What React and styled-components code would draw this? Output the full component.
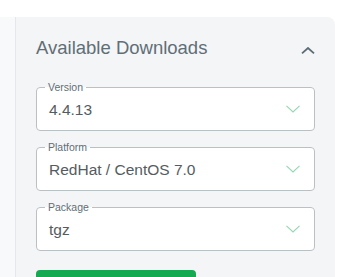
import React from "react";
import styled, { createGlobalStyle } from "styled-components";

const GlobalStyle = createGlobalStyle`
  html, body { margin: 0; padding: 0; background: #ffffff; }
  body { font-family: "Liberation Sans", Arial, sans-serif; overflow: hidden; }
  * { box-sizing: border-box; }
`;

const Page = styled.div`
  display: flex;
  align-items: stretch;
  padding-top: 17px;
  height: 277px;
`;

const Sidebar = styled.div`
  width: 16px;
  background: #f8f9fa;
  border-right: 1px solid #e4e8eb;
`;

const Panel = styled.section`
  width: 319px;
  background: #f4f5f7;
  border-top-right-radius: 8px;
  padding: 20px 20px 0 20px;
  display: flex;
  flex-direction: column;
`;

const Header = styled.div`
  display: flex;
  justify-content: space-between;
  align-items: flex-start;
  height: 22px;
`;

const Title = styled.h2`
  margin: 0;
  font-size: 18.5px;
  line-height: 22px;
  font-weight: 400;
  color: #606e76;
`;

const Toggle = styled.svg`
  margin-top: 10px;
  display: block;
`;

const Fields = styled.div`
  display: flex;
  flex-direction: column;
  gap: 10px;
  margin-top: 22px;
`;

const Box = styled.fieldset`
  margin: 0;
  padding: 0 14px 0 12px;
  border: 1px solid #b9c1c5;
  border-radius: 4px;
  background: #ffffff;
  min-width: 0;
`;

const Legend = styled.legend`
  margin-left: -4px;
  padding: 0 3px;
  font-size: 10.5px;
  line-height: 12px;
  color: #606e76;
`;

const Row = styled.div`
  display: flex;
  align-items: center;
  justify-content: space-between;
  height: 34px;
  margin-bottom: 3px;
`;

const Value = styled.span`
  font-size: 15.5px;
  color: #555c61;
  white-space: nowrap;
`;

const Caret = styled.svg`
  display: block;
  margin-bottom: 2px;
`;

const Button = styled.button`
  margin-top: 19px;
  width: 160px;
  height: 40px;
  flex-shrink: 0;
  border: none;
  border-radius: 4px;
  background: #13aa52;
`;

const ChevronDown = () => (
  <Caret width="14" height="8" viewBox="0 0 14 8">
    <path d="M0.5 0.8 L7 7 L13.5 0.8" fill="none" stroke="#93d8b1" strokeWidth="1.1" />
  </Caret>
);

const Select = ({ label, value }) => (
  <Box>
    <Legend>{label}</Legend>
    <Row>
      <Value>{value}</Value>
      <ChevronDown />
    </Row>
  </Box>
);

export default function App() {
  return (
    <>
      <GlobalStyle />
      <Page>
        <Sidebar />
        <Panel>
          <Header>
            <Title>Available Downloads</Title>
            <Toggle width="14" height="7" viewBox="0 0 14 7">
              <path d="M1 6.3 L7 1 L13 6.3" fill="none" stroke="#5d6c74" strokeWidth="1.8" />
            </Toggle>
          </Header>
          <Fields>
            <Select label="Version" value="4.4.13" />
            <Select label="Platform" value="RedHat / CentOS 7.0" />
            <Select label="Package" value="tgz" />
          </Fields>
          <Button aria-label="Download" />
        </Panel>
      </Page>
    </>
  );
}
